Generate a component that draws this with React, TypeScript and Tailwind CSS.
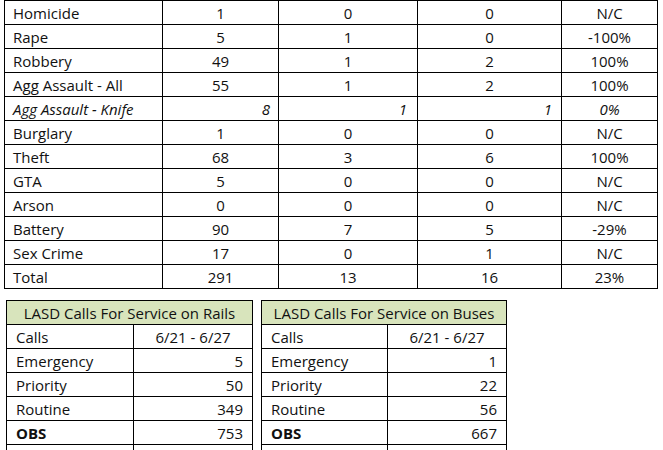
import React from 'react';

type Row = { label: string; a: string; b: string; c: string; d: string; italic?: boolean };

const crimes: Row[] = [
  { label: 'Homicide', a: '1', b: '0', c: '0', d: 'N/C' },
  { label: 'Rape', a: '5', b: '1', c: '0', d: '-100%' },
  { label: 'Robbery', a: '49', b: '1', c: '2', d: '100%' },
  { label: 'Agg Assault - All', a: '55', b: '1', c: '2', d: '100%' },
  { label: 'Agg Assault - Knife', a: '8', b: '1', c: '1', d: '0%', italic: true },
  { label: 'Burglary', a: '1', b: '0', c: '0', d: 'N/C' },
  { label: 'Theft', a: '68', b: '3', c: '6', d: '100%' },
  { label: 'GTA', a: '5', b: '0', c: '0', d: 'N/C' },
  { label: 'Arson', a: '0', b: '0', c: '0', d: 'N/C' },
  { label: 'Battery', a: '90', b: '7', c: '5', d: '-29%' },
  { label: 'Sex Crime', a: '17', b: '0', c: '1', d: 'N/C' },
  { label: 'Total', a: '291', b: '13', c: '16', d: '23%' },
];

const cell = 'h-[24px] border-r border-b border-black flex items-center leading-none pt-[2px]';

function CrimeTable() {
  return (
    <div className="ml-[4px] w-[654px] border-l border-t border-black">
      {crimes.map((r) => (
        <div
          key={r.label}
          className={`grid grid-cols-[158px_116px_139px_144px_96px] ${r.italic ? 'italic' : ''}`}
        >
          <div className={`${cell} pl-[8px]`}>{r.label}</div>
          {r.italic ? (
            <>
              <div className={`${cell} justify-end pr-[8px]`}>{r.a}</div>
              <div className={`${cell} justify-end pr-[10px]`}>{r.b}</div>
              <div className={`${cell} justify-end pr-[9px]`}>{r.c}</div>
            </>
          ) : (
            <>
              <div className={`${cell} justify-center`}>{r.a}</div>
              <div className={`${cell} justify-center`}>{r.b}</div>
              <div className={`${cell} justify-center`}>{r.c}</div>
            </>
          )}
          <div className={`${cell} justify-center`}>{r.d}</div>
        </div>
      ))}
    </div>
  );
}

function CallsTable({ title, counts, cols }: { title: string; counts: string[]; cols: string }) {
  const rows = [
    ['Emergency', counts[0]],
    ['Priority', counts[1]],
    ['Routine', counts[2]],
    ['OBS', counts[3]],
  ];
  return (
    <div className="border-l border-t border-black">
      <div className={`${cell} justify-center bg-[#d8e4bc]`}>{title}</div>
      <div className={`grid ${cols}`}>
        <div className={`${cell} pl-[9px]`}>Calls</div>
        <div className={`${cell} justify-center`}>6/21 - 6/27</div>
        {rows.map(([k, v]) => (
          <React.Fragment key={k}>
            <div className={`${cell} pl-[9px] ${k === 'OBS' ? 'font-bold' : ''}`}>{k}</div>
            <div className={`${cell} justify-end pr-[9px]`}>{v}</div>
          </React.Fragment>
        ))}
        <div className={cell}></div>
        <div className={cell}></div>
      </div>
    </div>
  );
}

export default function App() {
  return (
    <div className="w-[663px] h-[450px] overflow-hidden bg-white text-[15px] text-[#111] font-['Open_Sans',sans-serif]">
      <CrimeTable />
      <div className="mt-[11px] flex">
        <div className="ml-[6px] w-[247px]">
          <CallsTable
            title="LASD Calls For Service on Rails"
            counts={['5', '50', '349', '753']}
            cols="grid-cols-[127px_119px]"
          />
        </div>
        <div className="ml-[8px] w-[246px]">
          <CallsTable
            title="LASD Calls For Service on Buses"
            counts={['1', '22', '56', '667']}
            cols="grid-cols-[126px_119px]"
          />
        </div>
      </div>
    </div>
  );
}
